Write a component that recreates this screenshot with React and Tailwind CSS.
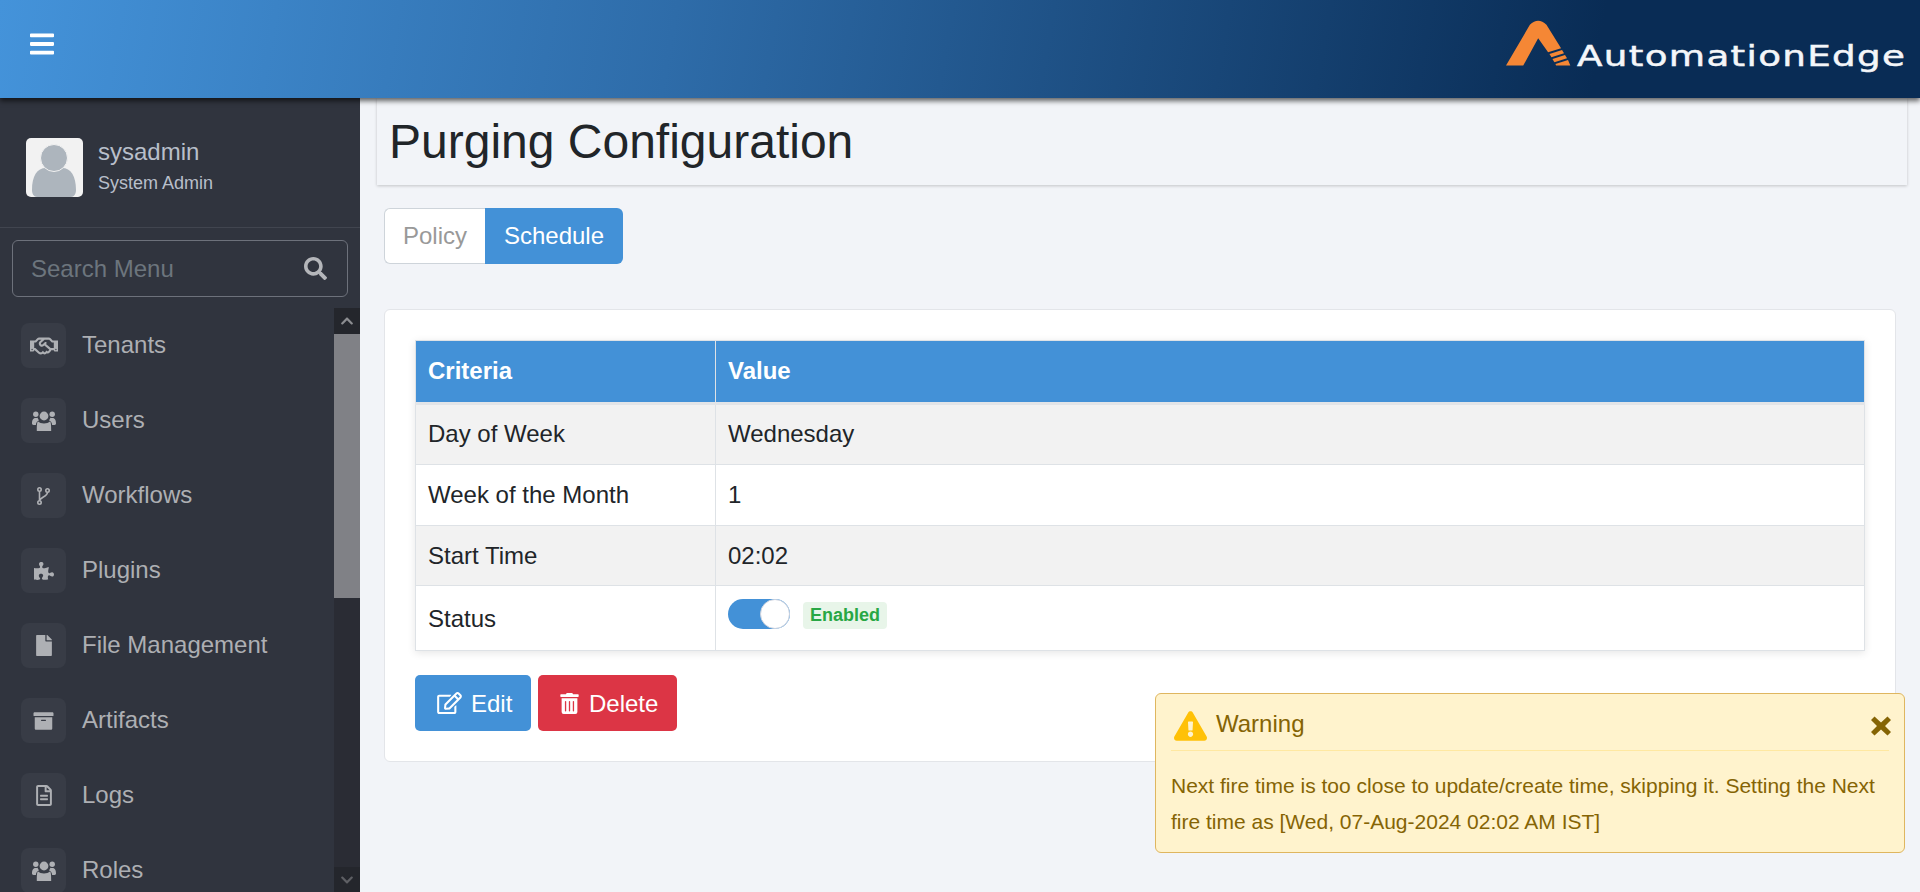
import { FaBars, FaSearch, FaRegHandshake, FaPuzzlePiece, FaFile, FaArchive, FaRegFileAlt, FaRegEdit, FaTrashAlt, FaExclamationTriangle, FaChevronUp, FaChevronDown } from 'react-icons/fa';

const UsersIcon = ({ className }) => (
    <svg viewBox="0 0 24 22" className={className} fill="currentColor">
        <circle cx="12" cy="6" r="4.4" />
        <circle cx="3.8" cy="4.2" r="2.7" />
        <circle cx="20.2" cy="4.2" r="2.7" />
        <path d="M6 11.6c1.4 1.3 3.4 1.9 6 1.9s4.600-.6 6-1.900c.9.700 1.200 3 1.200 9.400H4.800C4.800 14.600 5.100 12.300 6 11.600z" />
        <path d="M3.800 8c.7 0 1.200-.1 1.800-.3.300 1 .8 1.900 1.500 2.500C5.300 10.800 4 12.500 3.900 15H1.500C.5 15 0 14.500 0 13.600 0 10.500.7 8 3.800 8z" />
        <path d="M20.200 8c-.7 0-1.200-.1-1.800-.3-.3 1-.8 1.900-1.500 2.500 1.800.6 3.100 2.300 3.200 4.800h2.400c1 0 1.500-.5 1.500-1.400C24 10.500 23.300 8 20.200 8z" />
    </svg>
);

const ForkIcon = ({ className }) => (
    <svg viewBox="0 0 13 18" className={className} fill="none" stroke="currentColor" strokeWidth="1.600">
        <circle cx="2.500" cy="2.500" r="1.700" />
        <circle cx="2.500" cy="15.500" r="1.700" />
        <circle cx="10.500" cy="3.500" r="1.700" />
        <path d="M2.500 4.200v9.600M2.500 13.500c1-3.500 8-4 8-8.300" />
    </svg>
);

const CloseIcon = ({ className }) => (
    <svg viewBox="0 0 22 20" className={className} fill="currentColor">
        <path d="M1 4 4.500 .5 11 6.500 17.500 .5 21 4 15 10 21 16 17.500 19.500 11 13.500 4.500 19.500 1 16 7 10Z" />
    </svg>
);

const menuItems = [
    { label: 'Tenants', icon: <FaRegHandshake className="w-[28px] h-[28px]" /> },
    { label: 'Users', icon: <UsersIcon className="w-[24px] h-[22px]" /> },
    { label: 'Workflows', icon: <ForkIcon className="w-[13px] h-[18px]" /> },
    { label: 'Plugins', icon: <FaPuzzlePiece className="w-[20px] h-[20px]" /> },
    { label: 'File Management', icon: <FaFile className="w-[18px] h-[21px]" /> },
    { label: 'Artifacts', icon: <FaArchive className="w-[21px] h-[20px]" /> },
    { label: 'Logs', icon: <FaRegFileAlt className="w-[18px] h-[21px]" /> },
    { label: 'Roles', icon: <UsersIcon className="w-[24px] h-[22px]" /> },
];

const rows = [
    { name: 'Day of Week', value: 'Wednesday', shade: true, height: 'h-[61px]', pad: 'pb-[2px]' },
    { name: 'Week of the Month', value: '1', height: 'h-[61px]', pad: '' },
    { name: 'Start Time', value: '02:02', shade: true, height: 'h-[60px]', pad: '' },
];

const Logo = () => (
    <div className="flex items-end">
        <svg viewBox="78 58 196 138" className="w-[65px] h-[46px] -translate-y-[6px]" fill="#f58735">
            <path d="M78 195 150 72Q175 48 200 72L244 143 205 155 175 113 130 195Z" />
            <path d="M209 160 247 148 253 158 215 170Z" />
            <path d="M218 175 256 163 262 173 224 185Z" />
            <path d="M227 190 265 178 272 195 229 195Z" />
        </svg>
        <span className="ml-[6px] w-[328px] text-[28px] leading-[30px] tracking-[1px] text-[#f4f6f9] origin-left scale-x-[1.33] [-webkit-text-stroke:0.5px_#f4f6f9] font-['DejaVu_Sans',sans-serif] whitespace-nowrap">
            AutomationEdge
        </span>
    </div>
);

const Sidebar = () => (
    <aside className="w-[360px] shrink-0 h-full flex flex-col bg-[#30343e] overflow-hidden">
        <div className="h-[130px] shrink-0 flex items-start pt-[40px] pl-[26px] border-b border-[#41454f]">
            <div className="w-[57px] h-[59px] rounded-[5px] bg-[#f2f2f2] overflow-hidden flex justify-center">
                <svg viewBox="0 0 57 59" className="w-[57px] h-[59px]" fill="#adb5bd">
                    <path d="M6 52c0-14 5-22 14-22 3 2 13 2 16 0 9 0 14 8 14 22 0 4-2 7-5 7H11c-3 0-5-3-5-7z" />
                    <circle cx="28" cy="20" r="13.500" stroke="#f2f2f2" />
                </svg>
            </div>
            <div className="ml-[15px] text-[#b8bfca]">
                <div className="text-[24px] leading-[28px]">sysadmin</div>
                <div className="text-[18px] leading-[22px] mt-[6px]">System Admin</div>
            </div>
        </div>
        <div className="h-[80px] shrink-0 px-[12px] pt-[12px]">
            <div className="h-[57px] rounded-[6px] border border-[#6d717b] flex items-center justify-between pl-[18px] pr-[20px]">
                <span className="text-[24px] text-[#6c757d]">Search Menu</span>
                <FaSearch className="w-[23px] h-[23px] text-[#b4b6ba]" />
            </div>
        </div>
        <div className="flex-1 flex min-h-0">
            <nav className="flex-1 overflow-hidden pt-[15px] pl-[21px] flex flex-col gap-[30px]">
                {menuItems.map((item) => (
                    <div key={item.label} className="flex items-center shrink-0">
                        <span className="w-[45px] h-[45px] rounded-lg bg-[#383c46] flex items-center justify-center text-[#aeb0b4]">
                            {item.icon}
                        </span>
                        <span className="ml-[16px] -mt-[2px] text-[24px] text-[#adafb3]">{item.label}</span>
                    </div>
                ))}
            </nav>
            <div className="w-[26px] flex flex-col bg-[#2a2c34]">
                <div className="h-[26px] bg-[#24262c] flex items-center justify-center text-[#8c8d91]">
                    <FaChevronUp className="w-[14px] h-[14px]" />
                </div>
                <div className="h-[264px] bg-[#808186]" />
                <div className="flex-1" />
                <div className="h-[25px] bg-[#24262c] flex items-center justify-center text-[#5e5f64]">
                    <FaChevronDown className="w-[14px] h-[14px]" />
                </div>
            </div>
        </div>
    </aside>
);

const ScheduleTable = () => (
    <table className="w-full border-collapse border border-[#dee2e6] shadow-[0_2px_8px_rgba(0,0,0,0.1)] text-[24px] text-[#212529]">
        <thead>
            <tr className="h-[63px] bg-[#4391d7] text-white font-bold text-left border-b-[3px] border-[#e3e5e8]">
                <th className="w-[300px] px-[12px] pb-[2px] border-r border-[#dee2e6]">Criteria</th>
                <th className="px-[12px] pb-[2px]">Value</th>
            </tr>
        </thead>
        <tbody>
            {rows.map((row) => (
                <tr key={row.name} className={`${row.height} border-b border-[#dee2e6] ${row.shade ? 'bg-[#f2f2f2]' : 'bg-white'}`}>
                    <td className={`px-[12px] ${row.pad} border-r border-[#dee2e6]`}>{row.name}</td>
                    <td className={`px-[12px] ${row.pad}`}>{row.value}</td>
                </tr>
            ))}
            <tr className="h-[65px] bg-white">
                <td className="px-[12px] pt-[2px] border-r border-[#dee2e6]">Status</td>
                <td className="px-[12px]">
                    <div className="flex items-center gap-[13px] -mt-[8px]">
                        <div className="w-[62px] h-[30px] rounded-full bg-[#4391d7] relative">
                            <div className="absolute right-0 top-0 w-[30px] h-[30px] rounded-full bg-white border border-[#ccd3df]" />
                        </div>
                        <span className="h-[27px] mt-[2px] px-[7px] rounded-[4px] bg-[#e8f5e9] text-[#28a745] font-bold text-[18px] leading-[27px]">
                            Enabled
                        </span>
                    </div>
                </td>
            </tr>
        </tbody>
    </table>
);

const Toast = () => (
    <div className="absolute left-[1155px] top-[693px] w-[750px] h-[160px] rounded-[6px] bg-[#fff3cd] border border-[#dfb65f] px-[15px] text-[#856404]">
        <div className="h-[57px] flex items-center border-b border-[#ffe8a1]">
            <FaExclamationTriangle className="w-[33px] h-[30px] ml-[3px] mt-[8px] text-[#ffc107]" />
            <span className="ml-[9px] mt-[4px] text-[24px] leading-[28px]">Warning</span>
            <CloseIcon className="ml-auto mr-[-3px] mt-[8px] w-[22px] h-[20px] text-[#856404]" />
        </div>
        <p className="mt-[17px] text-[21px] leading-[36px]">
            Next fire time is too close to update/create time, skipping it. Setting the Next fire time as [Wed, 07-Aug-2024 02:02 AM IST]
        </p>
    </div>
);

const App = () => {
    return (
        <div className="relative w-[1920px] h-[892px] overflow-hidden flex flex-col bg-[#f2f4f8] font-['Liberation_Sans',Arial,sans-serif]">
            <header className="relative z-10 h-[98px] shrink-0 flex items-center justify-between pl-[30px] pr-[15px] shadow-[0_3px_5px_rgba(0,0,0,0.6)] bg-[linear-gradient(100deg,#4493da_0%,#2e6ca9_35%,#092c55_83%)]">
                <FaBars className="w-[24px] h-[28px] -mt-[10px] text-white" />
                <Logo />
            </header>
            <div className="flex flex-1 min-h-0">
                <Sidebar />
                <main className="flex-1 min-w-0 pl-[17px] pr-[13px]">
                    <div className="h-[87px] px-[12px] flex items-center bg-[#f2f4f8] shadow-[0_1px_3px_rgba(0,0,0,0.2)]">
                        <h1 className="text-[48px] leading-[56px] text-[#212529]">Purging Configuration</h1>
                    </div>
                    <div className="mt-[23px] ml-[7px] flex text-[24px]">
                        <button className="w-[101px] h-[56px] rounded-l-[6px] bg-white border border-[#ced4da] border-r-0 text-[#999999]">Policy</button>
                        <button className="w-[138px] h-[56px] rounded-r-[6px] bg-[#4391d7] text-white">Schedule</button>
                    </div>
                    <section className="mt-[45px] ml-[7px] mr-[11px] h-[453px] bg-white rounded-[6px] border border-[#e3e5e9] px-[30px] pt-[30px]">
                        <ScheduleTable />
                        <div className="mt-[24px] flex gap-[7px] text-[24px] text-white">
                            <button className="w-[116px] h-[56px] rounded-[5px] bg-[#4391d7] flex items-center pl-[22px] gap-[9px]">
                                <FaRegEdit className="w-[25px] h-[22px]" />
                                <span className="mt-[2px]">Edit</span>
                            </button>
                            <button className="w-[139px] h-[56px] rounded-[5px] bg-[#dc3545] flex items-center pl-[22px] gap-[10px]">
                                <FaTrashAlt className="w-[19px] h-[21px]" />
                                <span className="mt-[2px]">Delete</span>
                            </button>
                        </div>
                    </section>
                </main>
            </div>
            <Toast />
        </div>
    );
};

export default App;
